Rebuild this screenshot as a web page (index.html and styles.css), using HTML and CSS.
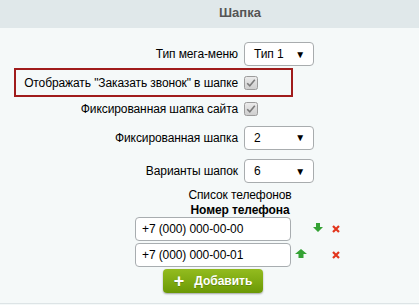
FILE: index.html
```html
<!DOCTYPE html>
<html lang="ru">
<head>
  <meta charset="UTF-8">
  <title>Шапка</title>
  <link rel="stylesheet" href="styles.css">
</head>
<body>

  <div class="panel">
    <div class="heading">Шапка</div>

    <!-- Options -->
    <div class="options">
      <div class="row row-select">
        <div class="label">Тип мега-меню</div>
        <div class="value">
          <div class="select"><span>Тип 1</span><span class="arrow">▼</span></div>
        </div>
      </div>

      <div class="row row-check row-marked">
        <div class="mark"></div>
        <div class="label">Отображать "Заказать звонок" в шапке</div>
        <div class="value">
          <svg class="checkbox" width="14" height="14" viewBox="0 0 14 14">
            <defs>
              <linearGradient id="cb1" x1="0" y1="0" x2="0" y2="1">
                <stop offset="0" stop-color="#ececec"/>
                <stop offset="1" stop-color="#cdcdcd"/>
              </linearGradient>
            </defs>
            <rect x="0.5" y="0.5" width="13" height="13" rx="2" fill="url(#cb1)" stroke="#9c9c9c"/>
            <path d="M3.2 7.2 L5.8 9.8 L10.8 3.8" fill="none" stroke="#7b7b7b" stroke-width="1.6"/>
          </svg>
        </div>
      </div>

      <div class="row row-check row-short">
        <div class="label">Фиксированная шапка сайта</div>
        <div class="value">
          <svg class="checkbox" width="14" height="14" viewBox="0 0 14 14">
            <rect x="0.5" y="0.5" width="13" height="13" rx="2" fill="url(#cb1)" stroke="#9c9c9c"/>
            <path d="M3.2 7.2 L5.8 9.8 L10.8 3.8" fill="none" stroke="#7b7b7b" stroke-width="1.6"/>
          </svg>
        </div>
      </div>

      <div class="row row-select row-mid">
        <div class="label">Фиксированная шапка</div>
        <div class="value">
          <div class="select"><span>2</span><span class="arrow">▼</span></div>
        </div>
      </div>

      <div class="row row-select row-tall">
        <div class="label">Варианты шапок</div>
        <div class="value">
          <div class="select"><span>6</span><span class="arrow">▼</span></div>
        </div>
      </div>
    </div>

    <!-- Phones -->
    <div class="phones">
      <div class="phones-title">Список телефонов</div>
      <div class="phones-head">Номер телефона</div>

      <div class="phone-table">
        <input class="phone" type="text" value="+7 (000) 000-00-00">
        <span></span>
        <svg class="move" width="10" height="9" viewBox="0 0 10 9">
          <path d="M3 0 H7 V4 H10 L5 9 L0 4 H3 Z" fill="#34a234"/>
        </svg>
        <svg class="remove" width="8" height="8" viewBox="0 0 8 8">
          <path d="M1 1 L7 7 M7 1 L1 7" stroke="#e2361d" stroke-width="2.2"/>
        </svg>
        <span></span>

        <input class="phone" type="text" value="+7 (000) 000-00-01">
        <svg class="move" width="12" height="9" viewBox="0 0 12 9">
          <path d="M6 0 L12 5 H8.5 V9 H3.5 V5 H0 Z" fill="#34a234"/>
        </svg>
        <span></span>
        <svg class="remove" width="8" height="8" viewBox="0 0 8 8">
          <path d="M1 1 L7 7 M7 1 L1 7" stroke="#e2361d" stroke-width="2.2"/>
        </svg>
        <span></span>

        <button class="add-btn"><span class="plus">+</span>Добавить</button>
      </div>
    </div>
  </div>

</body>
</html>
```

FILE: styles.css
```css
html, body {
  overflow: hidden;
}
body {
  font-family: "Liberation Sans", Arial, sans-serif;
  font-size: 12px;
  letter-spacing: -0.1px;
  background-color: #f5f9f9;
  margin: 0;
  color: #000;
}
.panel {
  width: 480px;
  border-bottom: 1px solid #dde4e6;
}
.heading {
  height: 28px;
  line-height: 26px;
  background-color: #e0e8ea;
  text-align: center;
  font-size: 13px;
  letter-spacing: 0;
  font-weight: bold;
  color: #555;
}
.options {
  padding-top: 10px;
}
.row {
  position: relative;
  display: grid;
  grid-template-columns: 240px 240px;
  align-items: center;
  height: 32px;
}
.row-check {
  height: 26px;
}
.row-short {
  height: 25px;
}
.row-mid {
  height: 33px;
}
.row-tall {
  height: 34px;
}
.label {
  text-align: right;
  padding-right: 2px;
}
.value {
  padding-left: 4px;
  display: flex;
  align-items: center;
}
.mark {
  position: absolute;
  left: 14px;
  top: -2px;
  width: 279px;
  height: 29px;
  border: 2px solid #a01c1c;
  box-sizing: border-box;
}
.select {
  width: 70px;
  height: 24px;
  box-sizing: border-box;
  border: 1px solid #a8acae;
  border-radius: 4px;
  background: #fff;
  display: flex;
  align-items: center;
  justify-content: space-between;
  padding: 0 8px 0 9px;
}
.select .arrow {
  font-size: 10px;
}
.checkbox {
  display: block;
}
.phones {
  padding-bottom: 10px;
}
.phones-title, .phones-head {
  text-align: center;
  line-height: 15px;
}
.phones-head {
  font-weight: bold;
  line-height: 14px;
}
.phone-table {
  width: 210px;
  margin: 0 auto;
  display: grid;
  grid-template-columns: 156px 16px 16px 17px 5px;
  row-gap: 2px;
  align-items: center;
}
.phone {
  width: 156px;
  height: 24px;
  box-sizing: border-box;
  border: 1px solid #a8adb0;
  border-radius: 4px;
  background: #fff;
  padding: 0 6px;
  font-family: "Liberation Sans", Arial, sans-serif;
  font-size: 12px;
  letter-spacing: -0.1px;
  color: #000;
  margin: 0;
}
.move, .remove {
  justify-self: end;
  display: block;
}
.move {
  margin-top: -3px;
}
.add-btn {
  grid-column: 1;
  justify-self: center;
  width: 100px;
  height: 24px;
  border: none;
  border-radius: 4px;
  background: linear-gradient(#93bc1f, #6b9905);
  box-shadow: 0 1px 2px rgba(0,0,0,0.35);
  color: #fff;
  font-family: "Liberation Sans", Arial, sans-serif;
  font-size: 12px;
  font-weight: bold;
  padding: 0;
  display: flex;
  align-items: center;
  justify-content: center;
  text-shadow: 0 1px 0 rgba(0,0,0,0.2);
}
.plus {
  font-size: 18px;
  margin-right: 10px;
  line-height: 1;
}
```
